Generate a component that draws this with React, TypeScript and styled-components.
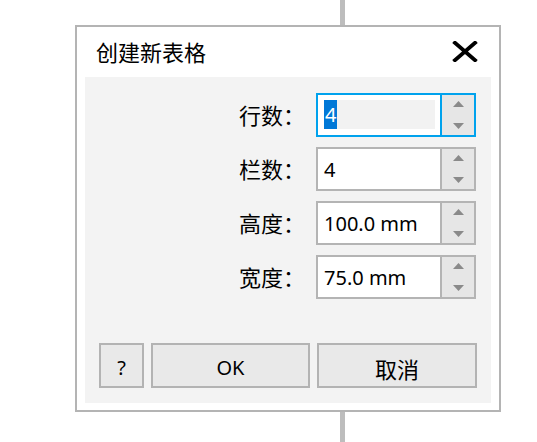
import React from "react"
import styled, { createGlobalStyle } from "styled-components"

const GlobalStyle = createGlobalStyle`
  html, body {
    margin: 0;
    padding: 0;
  }
  body {
    width: 537px;
    height: 442px;
    overflow: hidden;
    background: linear-gradient(to right, #fff 340px, #bdbdbd 340px, #bdbdbd 345px, #fff 345px);
    font-family: "Noto Sans", "Noto Sans CJK SC", sans-serif;
    color: #000;
  }
`

const Page = styled.div`
  padding: 25px 0 0 75px;
`

const Dialog = styled.div`
  box-sizing: border-box;
  width: 426px;
  height: 387px;
  border: 2px solid #b4b4b4;
  background: #fff;
  display: flex;
  flex-direction: column;
`

const TitleBar = styled.div`
  height: 50px;
  flex: none;
  display: flex;
  align-items: center;
  justify-content: space-between;
  padding: 0 21px 0 19px;
`

const Title = styled.div`
  font-size: 22px;
  line-height: 1;
`

const CloseButton = styled.div`
  width: 26px;
  height: 21px;
  display: flex;
  margin-top: -2px;
  cursor: default;
`

const Panel = styled.div`
  flex: 1;
  margin: 0 8px 7px;
  background: #f3f3f3;
  padding: 16px 14px 15px 14px;
  display: flex;
  flex-direction: column;
  justify-content: space-between;
`

const Fields = styled.div`
  display: flex;
  flex-direction: column;
  gap: 10px;
  padding-right: 1px;
`

const Row = styled.div`
  display: flex;
  justify-content: flex-end;
  align-items: center;
  gap: 11px;
`

const Label = styled.div`
  font-size: 22px;
  line-height: 1;
`

const SpinBox = styled.div<{ $focused?: boolean }>`
  box-sizing: border-box;
  width: 160px;
  height: 44px;
  border: 2px solid ${(p) => (p.$focused ? "#00a2ed" : "#b4b4b4")};
  background: #fff;
  display: flex;
`

const EditArea = styled.div<{ $focused?: boolean }>`
  box-sizing: border-box;
  width: 122px;
  display: flex;
  align-items: center;
  padding: ${(p) => (p.$focused ? "5px 5px 6px 6px" : "1px 0 0 6px")};
  font-size: 20px;
`

const FocusedText = styled.div`
  flex: 1;
  height: 100%;
  background: #f2f2f2;
  display: flex;
`

const Selection = styled.span`
  background: #0078d7;
  color: #fff;
  padding: 0 1px 0 1px;
  display: flex;
  align-items: center;
`

const SpinButtons = styled.div<{ $focused?: boolean }>`
  flex: 1;
  border-left: 2px solid ${(p) => (p.$focused ? "#00a2ed" : "#b4b4b4")};
  background: #e6e6e6;
  display: flex;
  flex-direction: column;
`

const SpinHalf = styled.div<{ $down?: boolean }>`
  flex: 1;
  display: flex;
  justify-content: center;
  align-items: ${(p) => (p.$down ? "flex-end" : "flex-start")};
  padding: ${(p) => (p.$down ? "0 0 6px" : "6px 0 0")};
`

const Buttons = styled.div`
  display: flex;
  gap: 7px;
`

const Button = styled.button<{ $width: number; $size?: number }>`
  box-sizing: border-box;
  width: ${(p) => p.$width}px;
  height: 45px;
  border: 2px solid #b3b3b3;
  background: #e9e9e9;
  font-family: "Noto Sans", "Noto Sans CJK SC", sans-serif;
  font-size: ${(p) => p.$size ?? 20}px;
  color: #000;
  padding: 4px 0 0;
  display: flex;
  align-items: center;
  justify-content: center;
`

const Arrow = ({ down }: { down?: boolean }) => (
  <svg width="11" height="6" viewBox="0 0 11 6">
    <polygon points={down ? "0,0 11,0 5.5,6" : "0,6 11,6 5.5,0"} fill="#8a8a8a" />
  </svg>
)

const Field = ({ label, value, focused }: { label: string; value: string; focused?: boolean }) => (
  <Row>
    <Label>{label}</Label>
    <SpinBox $focused={focused}>
      <EditArea $focused={focused}>
        {focused ? (
          <FocusedText>
            <Selection>{value}</Selection>
          </FocusedText>
        ) : (
          value
        )}
      </EditArea>
      <SpinButtons $focused={focused}>
        <SpinHalf>
          <Arrow />
        </SpinHalf>
        <SpinHalf $down>
          <Arrow down />
        </SpinHalf>
      </SpinButtons>
    </SpinBox>
  </Row>
)

export default function App() {
  return (
    <>
      <GlobalStyle />
      <Page>
        <Dialog>
          <TitleBar>
            <Title>创建新表格</Title>
            <CloseButton>
              <svg width="26" height="21" viewBox="0 0 26 21">
                <path d="M1.5 0.5 L24.5 20.5 M24.5 0.5 L1.5 20.5" stroke="#000" strokeWidth="3.8" />
              </svg>
            </CloseButton>
          </TitleBar>
          <Panel>
            <Fields>
              <Field label="行数：" value="4" focused />
              <Field label="栏数：" value="4" />
              <Field label="高度：" value="100.0 mm" />
              <Field label="宽度：" value="75.0 mm" />
            </Fields>
            <Buttons>
              <Button $width={45}>?</Button>
              <Button $width={159}>OK</Button>
              <Button $width={160} $size={22}>取消</Button>
            </Buttons>
          </Panel>
        </Dialog>
      </Page>
    </>
  )
}
